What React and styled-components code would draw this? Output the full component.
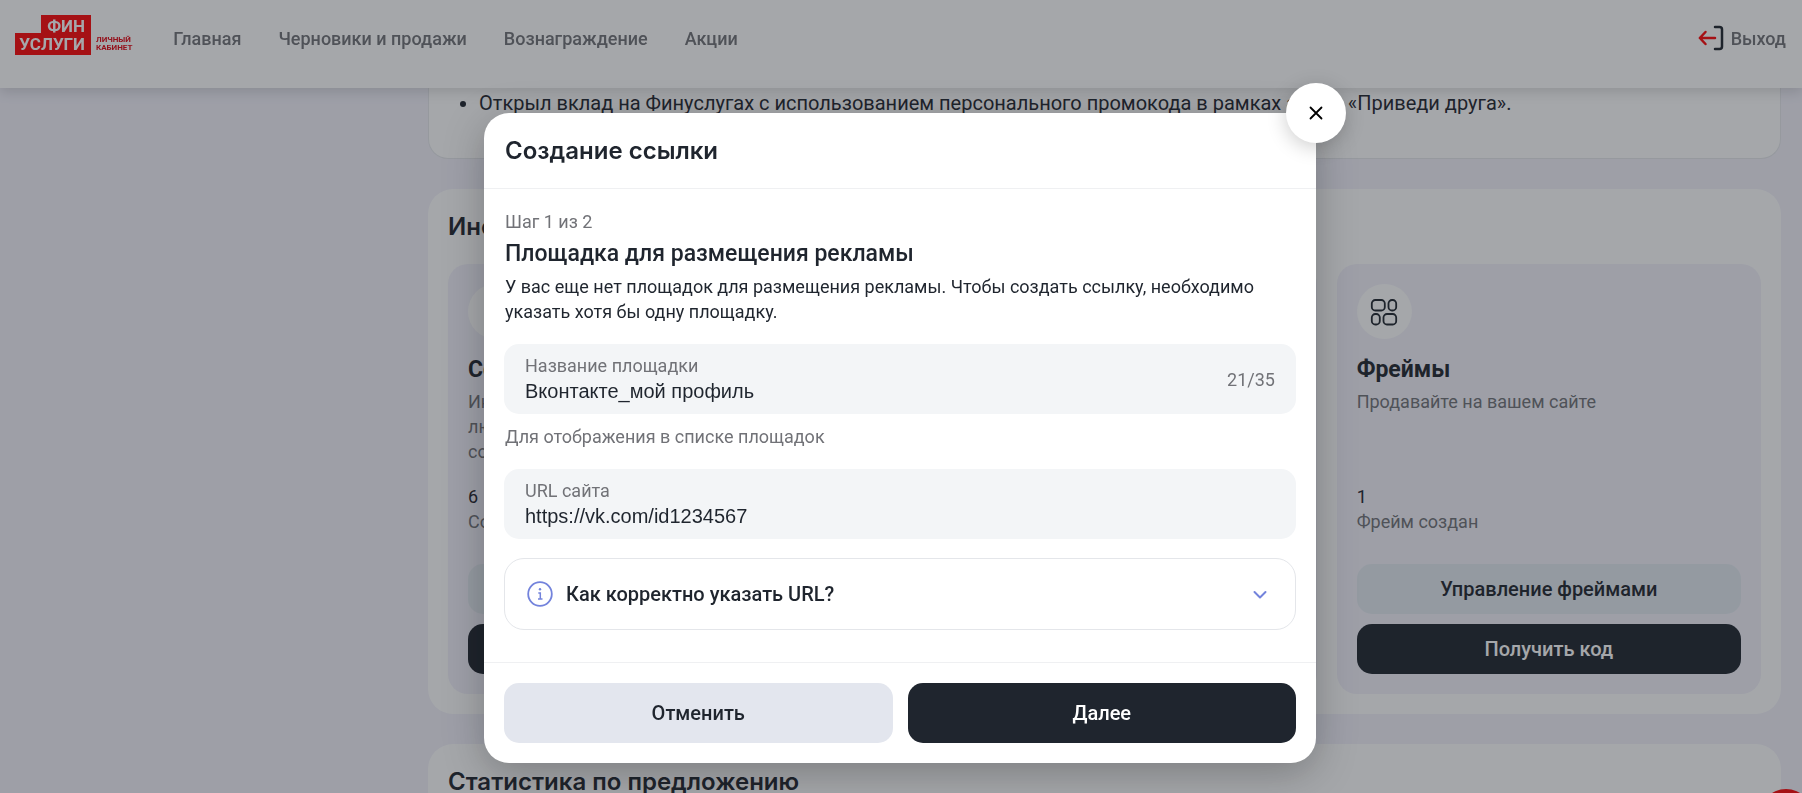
import React, { useState } from "react";
import styled, { createGlobalStyle } from "styled-components";

const ink = "#1f252e";
const grey = "#717277";
const roboto = 'Roboto, "Noto Sans", sans-serif';
const inter = 'Inter, "Noto Sans", sans-serif';

const GlobalStyle = createGlobalStyle`
  *, *::before, *::after { box-sizing: border-box; }
  body {
    margin: 0;
    height: 100vh;
    overflow: hidden;
    background: #f3f2fb;
    color: ${ink};
    font-family: ${roboto};
    font-size: 18px;
    line-height: 25px;
  }
  h1, h2, h3, p, ul { margin: 0; }
  button, input { font: inherit; color: inherit; }
`;

const Header = styled.header`
  position: sticky;
  top: 0;
  z-index: 1;
  display: flex;
  justify-content: space-between;
  height: 88px;
  padding: 15px 16px 0 15px;
  background: #fff;
  box-shadow: 0 4px 12px rgba(0, 0, 0, 0.14);
`;

const HeaderSide = styled.div`
  display: flex;
  align-items: flex-start;
  gap: 41px;
`;

const Logo = styled.a`
  display: flex;
  align-items: flex-end;
  gap: 5px;
  text-decoration: none;
`;

const LogoMark = styled.span`
  display: flex;
  flex-direction: column;
  align-items: flex-end;
  font-weight: 700;
  font-size: 17px;
  color: #fff;
`;

const LogoWord = styled.span`
  display: block;
  height: ${(p) => p.$height};
  width: ${(p) => p.$width};
  padding-right: 6px;
  line-height: 23px;
  text-align: right;
  background: #ff0508;
`;

const LogoNote = styled.span`
  padding-bottom: 3px;
  font-weight: 700;
  font-size: 8px;
  line-height: 8px;
  color: #e30613;
`;

const Nav = styled.nav`
  display: flex;
  gap: 37px;
  padding-top: 11px;
`;

const NavLink = styled.a`
  color: ${grey};
  font-size: 18px;
  font-weight: 500;
  text-decoration: none;
`;

const Exit = styled.a`
  display: flex;
  align-items: center;
  gap: 7px;
  margin-top: 10px;
  color: ${grey};
  font-weight: 500;
  text-decoration: none;
`;

const Layout = styled.div`
  display: grid;
  grid-template-columns: 428px minmax(0, 1fr);
  padding-right: 21px;
`;

const Content = styled.main`
  grid-column: 2;
  display: flex;
  flex-direction: column;
  gap: 30px;
`;

const Panel = styled.section`
  padding: 23px 20px 20px;
  border-radius: 25px;
  background: #fff;
`;

const RulesPanel = styled(Panel)`
  padding: 3px 20px 42px;
  border: 1px solid #e6e8ec;
  border-top: 0;
  border-radius: 0 0 20px 20px;
`;

const Rules = styled.ul`
  padding-left: 30px;
  font-size: 20px;
`;

const PanelTitle = styled.h2`
  font-family: ${inter};
  font-size: 24px;
  line-height: 30px;
  font-weight: 600;
`;

const Cards = styled.div`
  display: grid;
  grid-template-columns: repeat(3, minmax(0, 1fr));
  gap: 20px;
  margin-top: 22px;
`;

const Card = styled.article`
  display: flex;
  flex-direction: column;
  height: 430px;
  padding: 20px;
  border-radius: 20px;
  background: #f3f2fb;
`;

const CardIcon = styled.span`
  display: grid;
  place-items: center;
  flex: none;
  width: 55px;
  height: 55px;
  border-radius: 50%;
  background: #fff;
`;

const CardTitle = styled.h3`
  margin-top: 16px;
  font-size: 23px;
  line-height: 30px;
  font-weight: 700;
`;

const CardText = styled.p`
  flex: 1;
  padding-top: 4px;
  color: ${grey};
`;

const CardCount = styled.p`
  padding-bottom: 30px;
`;

const Muted = styled.span`
  display: block;
  color: ${grey};
`;

const Button = styled.button`
  flex: ${(p) => (p.$large ? "1" : "none")};
  height: ${(p) => (p.$large ? "60px" : "50px")};
  padding: 0 20px;
  border: 0;
  border-radius: 15px;
  background: ${(p) => (p.$tone === "dark" ? ink : p.$tone === "sky" ? "#e3eaf1" : "#e3e6ee")};
  color: ${(p) => (p.$tone === "dark" ? "#fff" : ink)};
  font-size: 20px;
  font-weight: 500;
`;

const CardActions = styled.div`
  display: flex;
  flex-direction: column;
  gap: 10px;
`;

const HelpButton = styled.button`
  position: fixed;
  right: -12px;
  bottom: -52px;
  width: 56px;
  height: 56px;
  border: 0;
  border-radius: 50%;
  background: #ff0508;
`;

const Overlay = styled.div`
  position: fixed;
  inset: 0;
  z-index: 2;
  display: flex;
  justify-content: center;
  align-items: flex-start;
  padding: 113px 20px 30px 18px;
  background: rgba(31, 34, 43, 0.4);
`;

const Dialog = styled.section`
  position: relative;
  width: 100%;
  max-width: 832px;
  border-radius: 25px;
  background: #fff;
  box-shadow: 0 10px 40px rgba(0, 0, 0, 0.25);
`;

const CloseButton = styled.button`
  position: absolute;
  top: -30px;
  right: -30px;
  display: grid;
  place-items: center;
  width: 60px;
  height: 60px;
  padding: 0;
  border: 0;
  border-radius: 50%;
  background: #fff;
  box-shadow: 0 4px 20px rgba(0, 0, 0, 0.2);
`;

const DialogHeader = styled.header`
  padding: 23px 21px 22px;
  border-bottom: 1px solid #eff0f2;
`;

const DialogTitle = styled.h1`
  font-family: ${inter};
  font-size: 24px;
  line-height: 30px;
  font-weight: 600;
`;

const DialogBody = styled.div`
  padding: 20px 20px 32px;
`;

const Intro = styled.div`
  padding: 0 1px;
`;

const StepTitle = styled.h2`
  margin: 5px 0;
  font-size: 23px;
  line-height: 30px;
  font-weight: 500;
`;

const Field = styled.div`
  display: flex;
  align-items: center;
  height: 70px;
  margin-top: 20px;
  padding: 0 21px;
  border-radius: 15px;
  background: #f3f5f7;
`;

const FieldMain = styled.div`
  flex: 1;
  display: flex;
  flex-direction: column;
`;

const FieldLabel = styled.label`
  color: ${grey};
`;

const FieldInput = styled.input`
  width: 100%;
  height: 27px;
  padding: 0;
  border: 0;
  outline: 0;
  background: transparent;
  font-family: "Liberation Sans", Arial, sans-serif;
  font-size: 20px;
`;

const Hint = styled.p`
  padding: 10px 1px 0;
  color: ${grey};
`;

const Accordion = styled.button`
  display: flex;
  align-items: center;
  width: 100%;
  height: 72px;
  margin-top: 19px;
  padding: 0 25px 0 22px;
  border: 1px solid #e4e6ea;
  border-radius: 20px;
  background: #fff;
  font-size: 20px;
  font-weight: 500;
  text-align: left;
`;

const AccordionText = styled.span`
  flex: 1;
  padding-left: 13px;
`;

const DialogFooter = styled.footer`
  display: flex;
  gap: 15px;
  padding: 20px;
  border-top: 1px solid #eff0f2;
`;

const ExitIcon = () => (
  <svg width="26" height="26" viewBox="0 0 26 26" fill="none" strokeWidth="2.5" strokeLinecap="round" strokeLinejoin="round" aria-hidden="true">
    <path d="M17 2h4.5q2.500 0 2.500 2.500v17q0 2.500-2.500 2.500H17" stroke={ink} />
    <path d="M17 13H2M7.500 7L1.800 13l5.700 6" stroke="#ff0508" />
  </svg>
);

const GridIcon = () => (
  <svg width="28" height="28" viewBox="0 0 28 28" fill="none" stroke={ink} strokeWidth="1.800" aria-hidden="true">
    <rect x="1.800" y="2" width="13" height="10.500" rx="3.500" />
    <rect x="18.500" y="2" width="7.700" height="10.500" rx="3.500" />
    <rect x="1.800" y="16" width="8" height="10.500" rx="3.500" />
    <rect x="13.500" y="16" width="12.700" height="10.500" rx="3.500" />
  </svg>
);

const LinkIcon = () => (
  <svg width="28" height="28" viewBox="0 0 24 24" fill="none" stroke={ink} strokeWidth="1.800" strokeLinecap="round" aria-hidden="true">
    <path d="M9 15l6-6M11 6l1.500-1.500a4 4 0 0 1 6 6L17 12M13 18l-1.500 1.500a4 4 0 0 1-6-6L7 12" />
  </svg>
);

const CloseIcon = () => (
  <svg width="14" height="14" viewBox="0 0 14 14" fill="none" stroke="#000" strokeWidth="1.800" strokeLinecap="round" aria-hidden="true">
    <path d="M1.500 1.500l11 11M12.500 1.500l-11 11" />
  </svg>
);

const InfoIcon = () => (
  <svg width="26" height="26" viewBox="0 0 26 26" fill="none" stroke="#7383dc" strokeWidth="1.800" aria-hidden="true">
    <circle cx="13" cy="13" r="11.800" />
    <path d="M11.300 12h2v6M11 18h4.500" strokeWidth="1.500" />
    <circle cx="13" cy="8.300" r="1.200" fill="#7383dc" stroke="none" />
  </svg>
);

const ChevronIcon = () => (
  <svg width="20" height="20" viewBox="0 0 20 20" fill="none" stroke="#7383dc" strokeWidth="2" strokeLinecap="round" strokeLinejoin="round" aria-hidden="true">
    <path d="M4.500 8l5.500 5.500L15.500 8" />
  </svg>
);

const navItems = ["Главная", "Черновики и продажи", "Вознаграждение", "Акции"];

const tools = [
  {
    title: "Ссылки",
    lines: ["Индивидуальные ссылки на", "любые предложения для", "социальных сетей"],
    count: 6,
    unit: "Создано",
    manage: "Управление ссылками",
    action: "Создать ссылку",
    icon: <LinkIcon />,
  },
  {
    title: "Промокоды",
    lines: ["Делитесь с клиентами"],
    count: 1,
    unit: "Создан",
    manage: "Управление",
    action: "Получить",
    icon: <GridIcon />,
  },
  {
    title: "Фреймы",
    lines: ["Продавайте на вашем сайте"],
    count: 1,
    unit: "Фрейм создан",
    manage: "Управление фреймами",
    action: "Получить код",
    icon: <GridIcon />,
  },
];

export default function App() {
  const [name, setName] = useState("Вконтакте_мой профиль");
  const [url, setUrl] = useState("https://vk.com/id1234567");

  return (
    <>
      <GlobalStyle />
      <Header>
        <HeaderSide>
          <Logo href="#">
            <LogoMark>
              <LogoWord $width="50px" $height="18px">ФИН</LogoWord>
              <LogoWord $width="76px" $height="22px">УСЛУГИ</LogoWord>
            </LogoMark>
            <LogoNote>ЛИЧНЫЙ<br />КАБИНЕТ</LogoNote>
          </Logo>
          <Nav>
            {navItems.map((item) => (
              <NavLink key={item} href="#">{item}</NavLink>
            ))}
          </Nav>
        </HeaderSide>
        <HeaderSide>
          <Exit href="#"><ExitIcon />Выход</Exit>
        </HeaderSide>
      </Header>

      <Layout>
        <Content>
          <RulesPanel>
            <Rules>
              <li>Открыл вклад на Финуслугах с использованием персонального промокода в рамках акции «Приведи друга».</li>
            </Rules>
          </RulesPanel>

          <Panel>
            <PanelTitle>Инструменты</PanelTitle>
            <Cards>
              {tools.map((tool) => (
                <Card key={tool.title}>
                  <CardIcon>{tool.icon}</CardIcon>
                  <CardTitle>{tool.title}</CardTitle>
                  <CardText>
                    {tool.lines.map((line) => (
                      <Muted key={line}>{line}</Muted>
                    ))}
                  </CardText>
                  <CardCount>{tool.count}<Muted>{tool.unit}</Muted></CardCount>
                  <CardActions>
                    <Button type="button" $tone="sky">{tool.manage}</Button>
                    <Button type="button" $tone="dark">{tool.action}</Button>
                  </CardActions>
                </Card>
              ))}
            </Cards>
          </Panel>

          <Panel>
            <PanelTitle>Статистика по предложению</PanelTitle>
          </Panel>
        </Content>
      </Layout>
      <HelpButton type="button" aria-label="Помощь" />

      <Overlay>
        <Dialog role="dialog" aria-modal="true" aria-labelledby="dialog-title">
          <DialogHeader>
            <DialogTitle id="dialog-title">Создание ссылки</DialogTitle>
          </DialogHeader>
          <DialogBody>
            <Intro>
              <Muted>Шаг 1 из 2</Muted>
              <StepTitle>Площадка для размещения рекламы</StepTitle>
              <p>У вас еще нет площадок для размещения рекламы. Чтобы создать ссылку, необходимо указать хотя бы одну площадку.</p>
            </Intro>
            <Field>
              <FieldMain>
                <FieldLabel htmlFor="site-name">Название площадки</FieldLabel>
                <FieldInput id="site-name" value={name} maxLength={35} onChange={(e) => setName(e.target.value)} />
              </FieldMain>
              <Muted>{name.length}/35</Muted>
            </Field>
            <Hint>Для отображения в списке площадок</Hint>
            <Field>
              <FieldMain>
                <FieldLabel htmlFor="site-url">URL сайта</FieldLabel>
                <FieldInput id="site-url" value={url} onChange={(e) => setUrl(e.target.value)} />
              </FieldMain>
            </Field>
            <Accordion type="button" aria-expanded="false">
              <InfoIcon />
              <AccordionText>Как корректно указать URL?</AccordionText>
              <ChevronIcon />
            </Accordion>
          </DialogBody>
          <DialogFooter>
            <Button type="button" $large $tone="light">Отменить</Button>
            <Button type="button" $large $tone="dark">Далее</Button>
          </DialogFooter>
          <CloseButton type="button" aria-label="Закрыть"><CloseIcon /></CloseButton>
        </Dialog>
      </Overlay>
    </>
  );
}
